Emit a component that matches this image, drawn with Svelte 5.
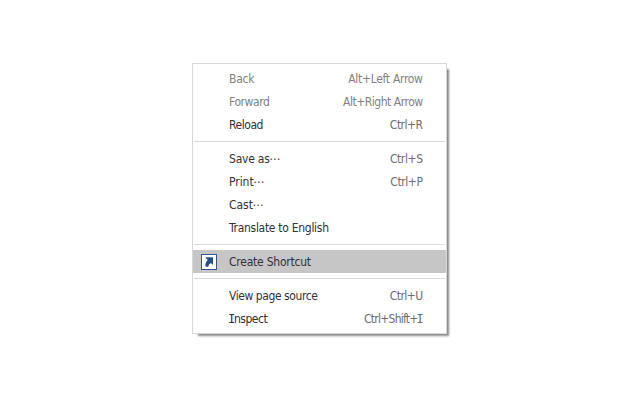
<script>
  const groups = [
    [
      { label: 'Back', keys: 'Alt+Left Arrow', disabled: true, keySpacing: -0.3 },
      { label: 'Forward', keys: 'Alt+Right Arrow', disabled: true, spacing: -0.4, keySpacing: -0.48 },
      { label: 'Reload', keys: 'Ctrl+R', spacing: -0.45, keySpacing: -0.5 }
    ],
    [
      { label: 'Save as', more: true, keys: 'Ctrl+S', keySpacing: -0.4 },
      { label: 'Print', more: true, keys: 'Ctrl+P', spacing: -0.05, keySpacing: -0.4 },
      { label: 'Cast', more: true, spacing: -0.05 },
      { label: 'Translate to English', spacing: -0.29 }
    ],
    [{ label: 'Create Shortcut', active: true, icon: true }],
    [
      { label: 'View page source', keys: 'Ctrl+U', spacing: -0.43, keySpacing: -0.55 },
      { label: 'Inspect', keys: 'Ctrl+Shift+I', spacing: -0.5, keySpacing: -0.75 }
    ]
  ];
</script>

{#snippet words(text)}
  {#each text.split(/(I)/) as part}{#if part === 'I'}<span class="serif-i">I</span>{:else}{part}{/if}{/each}
{/snippet}

<main>
  <div class="menu" role="menu">
    {#each groups as group, i}
      {#if i > 0}<div class="separator"></div>{/if}
      {#each group as item}
        <div class="item" class:disabled={item.disabled} class:active={item.active} role="menuitem" tabindex="-1">
          <span class="icon">
            {#if item.icon}
              <svg width="16" height="16" viewBox="0 0 16 16">
                <rect x=".5" y=".5" width="15" height="15" fill="#fff" stroke="#31588b" />
                <path d="M4.2 3.2H12v7.9L9.9 9Q7.4 10.2 7.3 12.8H4.6Q3.6 9.2 6.7 5.9z" fill="#254d86" />
              </svg>
            {/if}
          </span>
          <span class="label" style:letter-spacing="{item.spacing ?? -0.23}px">{@render words(item.label)}{#if item.more}<span class="dots">⋯</span>{/if}</span>
          <span class="keys" style:letter-spacing="{item.keySpacing ?? -0.5}px">{@render words(item.keys ?? '')}</span>
        </div>
      {/each}
    {/each}
  </div>
</main>

<style>
  :global(body) { background: #fff; }
  main {
    box-sizing: border-box;
    width: 640px;
    height: 400px;
    padding: 63px 0 0 192px;
    overflow: hidden;
  }
  .menu {
    box-sizing: border-box;
    width: 255px;
    height: 271px;
    padding: 3px 0;
    border: 1px solid #d5d8dc;
    background: #fff;
    box-shadow: 4px 4px 2px -2px #888;
    font: 12px/23px 'DejaVu Sans Condensed', 'DejaVu Sans', sans-serif;
    font-stretch: condensed;
    color: #303035;
  }
  .item {
    display: flex;
    align-items: center;
    height: 23px;
    padding: 0 23.4px 0 8px;
    white-space: nowrap;
  }
  .icon { width: 28px; height: 16px; }
  .icon svg { display: block; }
  .label, .keys { height: 23px; line-height: 25px; }
  .label { flex: 1; }
  .keys { color: #6c6c71; }
  .disabled, .disabled .keys { color: #808084; }
  .active { background: #c6c6c6; }
  .serif-i {
    display: inline-block;
    width: 5px;
    text-indent: -1px;
    font-family: 'DejaVu Sans Mono', monospace;
    line-height: 1;
  }
  .dots { letter-spacing: 0; }
  .separator { height: 1px; margin: 5px 1px; background: #d5d8dc; }
</style>
